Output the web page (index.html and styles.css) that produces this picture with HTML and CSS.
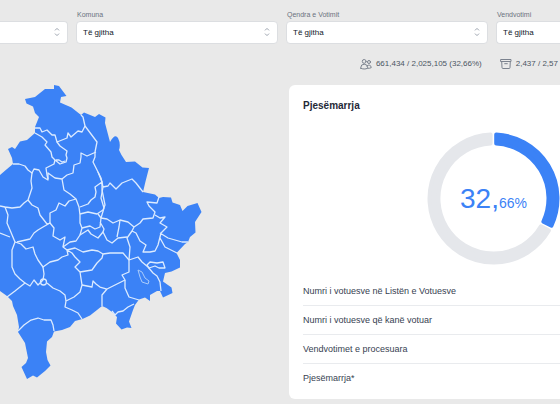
FILE: index.html
```html
<!DOCTYPE html>
<html lang="sq">
<head>
<meta charset="utf-8">
<meta name="viewport" content="width=device-width, initial-scale=1">
<title>Pjesëmarrja</title>
<link rel="stylesheet" href="styles.css">
</head>
<body>
<form class="filters">
  <div class="field field-first">
    <label for="level">&nbsp;</label>
    <div class="control"><select id="level" aria-label="Niveli"><option></option></select>
    <svg class="chevrons" viewBox="0 0 8 10"><path d="M2 3.4 4 1.4 6 3.4M2 6.6 4 8.6 6 6.6"/></svg></div>
  </div>
  <div class="field">
    <label for="komuna">Komuna</label>
    <div class="control"><select id="komuna"><option>Të gjitha</option></select>
    <svg class="chevrons" viewBox="0 0 8 10"><path d="M2 3.4 4 1.4 6 3.4M2 6.6 4 8.6 6 6.6"/></svg></div>
  </div>
  <div class="field">
    <label for="qendra">Qendra e Votimit</label>
    <div class="control"><select id="qendra"><option>Të gjitha</option></select>
    <svg class="chevrons" viewBox="0 0 8 10"><path d="M2 3.4 4 1.4 6 3.4M2 6.6 4 8.6 6 6.6"/></svg></div>
  </div>
  <div class="field field-last">
    <label for="vendvotimi">Vendvotimi</label>
    <div class="control"><select id="vendvotimi"><option>Të gjitha</option></select></div>
  </div>
</form>
<div class="status">
  <span class="stat">
    <svg class="icon" viewBox="0 0 12 12"><circle cx="4.2" cy="3.4" r="1.9"/><circle cx="9" cy="4" r="1.5"/><path d="M.8 10.2V9.6a3.4 3.4 0 0 1 6.8 0v.6C5.600 11.300 2.800 11.300.8 10.200ZM7.700 10.300c1.400.1 2.500-.1 3.500-.6a2.400 2.400 0 0 0-4.200-1.800"/></svg>
    <span>661,434 / 2,025,105 (32,66%)</span>
  </span>
  <span class="stat">
    <svg class="icon" viewBox="0 0 12 12"><path d="M1 1.500h10v2H1ZM1.700 3.500l.3 6a1 1 0 0 0 1 1h6a1 1 0 0 0 1-1l.3-6M4.700 5.700h2.600"/></svg>
    <span>2,437 / 2,57</span>
  </span>
</div>
<main class="content">
  <svg class="map" viewBox="0 85 204 297" role="img" aria-label="Kosova">
    <path class="land" d="M-5 178 0 175 7 169 13 164 12 158 8 149 12 147 15 149 20 141.500 27 140 35 133 35 127 39 117 35 113 33 106.500 26.500 103.500 25 99 35 97 45 89 54 89 54 85 59 86 66.500 96 61 97 60 102.500 71.500 107.500 81 115 84 112.500 95 117 99 114 105.500 117.500 105 123 110 142 Q115 133 118 138 Q121 144 119 150 L121.500 155 126 162 135 161.500 142.500 167.500 149 168 145.500 181.500 143 192 155 194.500 159 198 163 197 171 197.500 172.500 202.500 180 205 182.500 211 187.500 206 197.500 203 201.500 212 195 222 195.500 232.500 190 237 188 242 185 244 176.500 253 180 260 180 267.500 171.500 271.500 165 273 163 281.500 166.500 284 171.500 287.500 172.500 293 163 297.500 160 291 157 291 150 295 150 301 145 297.500 139 299.500 135 305 133 310 129 321.500 131.500 328 127 327.500 121.500 329.500 116 323.500 117 317 112 312 106.500 308 102 306 97 310 90 315.500 82.500 319 75 321 70 327 62 330 54 331.500 52 337 47 341.500 46 352 47.500 360 50.500 365.500 45 371 37 377.500 33 375.500 27 379 21.500 367 26 363 28 358 25 343 18 332 19 327 17 315 13 306 12 301 7 296 0 291 -5 289Z"/>
    <g class="borders">
      <path d="M35 128 40 128 42 132 47 130 52 135 55 135 57 142 67 138 68 133 71 137 78 131 82 132 85 126 83 117 81 115"/>
      <path d="M35 133 42 137 47 142 45 145 51 152 52 157 55 160 54 164 46 168 47 175 48 179"/>
      <path d="M57 142 60 146 67 151 66 155 67 158 66 162 60 164 55 160M56 160 59 160 62 162 65 161"/>
      <path d="M85 126 91 134 97 142 95 152 95 157 93 162 98 172 102 182"/>
      <path d="M96 152 87 156 81 153 81 157 80 163 74 165 73 173 67 175 62 179"/>
      <path d="M13 164 19 164 25 166 28 170 32 173 34 169 39 170 43 177 48 180 48 173 55 178 62 179 64 190 70 194 76 199 79 207 80 215 80 223 82 228 80 235"/>
      <path d="M32 173 31 181 32 188 28 200 24 203 20 207 12 208 5 207 0 206"/>
      <path d="M28 200 32 205 38 208 40 215 47 224 50 223 50 213 56 210 59 203 65 206 69 201 76 199"/>
      <path d="M80 207 88 204 91 200 95 197 96 192 95 187 102 182 102 190 105 205 103 210 97 214 88 212 80 214"/>
      <path d="M5 207 8 215 7 223 10 230 15 242 12 250 12 267 15 274 20 279 25 283 15 291 7 297M0 233 10 237"/>
      <path d="M17 242 30 239 34 233 38 230 43 227 50 223 54 228 53 236 60 240 65 237 63 247 67 250"/>
      <path d="M15 242 21 244 26 249 33 247 35 254 38 260 43 267 50 262 58 260 62 257 68 255 67 250 72 253 75 257 80 262 75 267 80 272 82 285 80 292 74 297 66 301 65 307 72 310 78 313 82 319"/>
      <path d="M43 267 44 274 43 280 38 285 34 280 30 286 25 283M47 283 53 288 60 291 65 295 66 301"/><circle cx="43.500" cy="282" r="3"/>
      <path d="M18 331 24 325 31 320 38 318 44 320 51 320 53 325 54 331"/>
      <path d="M80 272 92 270 97 263 102 258 103 254 98 251 92 250 83 252 75 248 67 250M103 254 110 253 123 253 129 260"/>
      <path d="M63 247 70 242 76 241 80 235 88 230 91 234 98 238 103 232 107 240 112 243 118 238 127 237"/>
      <path d="M82 228 90 226 95 229 100 227 101 218 98 214M100 222 104 229 103 232"/>
      <path d="M82 285 92 287 93 281 96 284 100 287 107 289 102 295 102 306M107 289 115 285 125 280 122 275 129 272 129 260"/>
      <path d="M129 260 138 257 142 262 148 267 153 273 157 276 160 282 161 291M125 280 125 288 129 297 139 300M112 311 115 315 118 312 123 311 128 307 134 304"/>
      <path d="M147 265 150 262 157 263 163 262 165 268 159 268 155 266 149 268Z"/>
      <path d="M98 172 101 178 103 187 108 186 110 183 116 189 122 183 132 179 136 183 143 192M103 187 101 198 104 208 101 218 107 219 113 223 120 220 128 222 134 227"/>
      <path d="M159 197 157 203 147 202 149 206 155 212 153 218 143 219 140 223 134 227 132 231 127 238 130 247 129 260M120 220 119 227 117 237"/>
      <path d="M155 215 160 218 165 217 160 223 167 227 161 233 158 245 155 251 150 252 143 252 146 245 140 241 136 233 132 231M160 233 168 238 182 242 188 242M160 238 165 247 177 253"/>
      <path class="thin" d="M138 270 142 272 145 278 149 281 148 284 142 282 140 277Z"/>
    </g>
  </svg>
  <section class="card">
    <h2>Pjesëmarrja</h2>
    <div class="chart">
      <svg viewBox="0 0 133 133" aria-hidden="true">
        <path class="rest" d="M121.900 98.600A64 64 0 1 1 63.600 2.600V11.600A55 55 0 1 0 113.900 94.300Z"/>
        <path class="done" d="M69.200 2.600A64 64 0 0 1 124.500 93.600L116.400 89.600A55 55 0 0 0 69.200 11.600Z"/>
      </svg>
      <p class="percent">32,<span>66%</span></p>
    </div>
    <ul class="facts">
      <li>Numri i votuesve në Listën e Votuesve</li>
      <li>Numri i votuesve që kanë votuar</li>
      <li>Vendvotimet e procesuara</li>
      <li>Pjesëmarrja*</li>
    </ul>
  </section>
</main>
</body>
</html>
```
FILE: styles.css
```css
* { box-sizing: border-box; }
body {
  margin: 0;
  background: #e9e9e9;
  color: #374151;
  font-family: "Liberation Sans", Arial, sans-serif;
  font-size: 9px;
  overflow-x: hidden;
}
.filters {
  display: grid;
  grid-template-columns: 68fr 202fr 202fr 64fr;
  gap: 8px;
  padding-top: 9px;
}
.field { min-width: 0; }
.field label {
  display: block;
  padding-left: 1px;
  font-size: 7px;
  line-height: 12px;
  color: #6b7280;
}
.control { position: relative; }
select {
  display: block;
  width: 100%;
  height: 23px;
  padding: 0 6px;
  border: 1px solid #dcdee1;
  border-radius: 4px;
  background: #fff;
  color: #111827;
  font: 8px "Liberation Sans", Arial, sans-serif;
  appearance: none;
}
.field-first select { border-left: 0; border-radius: 0 4px 4px 0; }
.field-last select { border-right: 0; border-radius: 4px 0 0 4px; }
.chevrons {
  position: absolute;
  top: 6px;
  right: 7px;
  width: 8px;
  height: 10px;
  fill: none;
  stroke: #9ca3af;
  pointer-events: none;
}
.status {
  display: flex;
  justify-content: flex-end;
  gap: 18px;
  padding: 14px 2px 15px 0;
  font-size: 8px;
  line-height: 12px;
  color: #4b5563;
  white-space: nowrap;
}
.stat { display: flex; align-items: center; gap: 4px; }
.icon {
  width: 12px;
  height: 12px;
  fill: none;
  stroke: #7b828e;
  stroke-linejoin: round;
  stroke-linecap: round;
}
.content {
  display: grid;
  grid-template-columns: 204fr 271fr;
  gap: 85px;
  align-items: start;
}
.map { display: block; width: 100%; }
.land { fill: #3b82f6; }
.borders { fill: none; stroke: #dcebff; stroke-width: 1.3; stroke-linejoin: round; }
.thin { stroke: #a9cbfb; stroke-width: 1; }
.card {
  padding: 14px 0 7px 14px;
  border-radius: 6px 0 0 6px;
  background: #fff;
}
h2 {
  margin: 0;
  font-size: 10px;
  line-height: 14px;
  color: #1f2937;
}
.chart {
  display: grid;
  place-items: center;
  justify-content: end;
  margin: 19px 0 12px;
}
.chart svg { grid-area: 1 / 1; width: 133px; height: 133px; }
.chart path { stroke-width: 4; stroke-linejoin: round; }
.rest { fill: #e5e7eb; stroke: #e5e7eb; }
.done { fill: #3b82f6; stroke: #3b82f6; }
.percent {
  grid-area: 1 / 1;
  margin: 0;
  padding-top: 4px;
  font-size: 28px;
  line-height: 32px;
  color: #3b82f6;
}
.percent span { font-size: 14px; }
.facts { margin: 0; padding: 0; list-style: none; }
.facts li { padding: 7px 0; line-height: 14px; }
.facts li + li { border-top: 1px solid #e9ebee; }
```
